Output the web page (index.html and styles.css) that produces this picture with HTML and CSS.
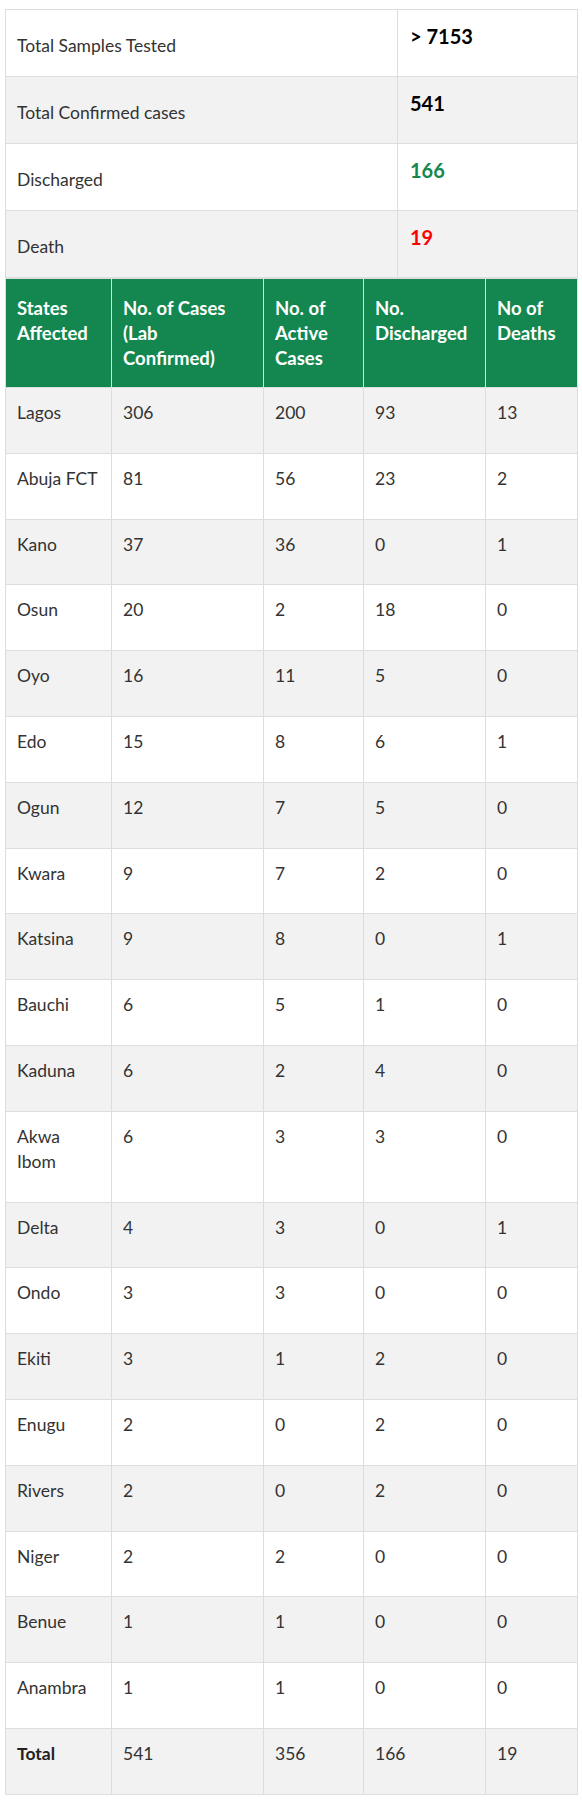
FILE: index.html
```html
<!DOCTYPE html>
<html lang="en">
<head>
<meta charset="utf-8">
<title>COVID-19 Nigeria</title>
<link rel="stylesheet" href="styles.css">
</head>
<body>
<div class="wrap">
  <table class="summary">
    <colgroup><col class="c-label"><col class="c-value"></colgroup>
    <tbody>
      <tr><td class="label">Total Samples Tested</td><td class="value">&gt; 7153</td></tr>
      <tr><td class="label">Total Confirmed cases</td><td class="value">541</td></tr>
      <tr><td class="label">Discharged</td><td class="value green">166</td></tr>
      <tr><td class="label">Death</td><td class="value red">19</td></tr>
    </tbody>
  </table>
  <table class="states">
    <colgroup>
      <col class="s1"><col class="s2"><col class="s3"><col class="s4"><col class="s5">
    </colgroup>
    <thead>
      <tr>
        <th>States Affected</th>
        <th>No. of Cases (Lab Confirmed)</th>
        <th>No. of Active Cases</th>
        <th>No. Discharged</th>
        <th>No of Deaths</th>
      </tr>
    </thead>
    <tbody>
      <tr><td>Lagos</td><td>306</td><td>200</td><td>93</td><td>13</td></tr>
      <tr><td>Abuja FCT</td><td>81</td><td>56</td><td>23</td><td>2</td></tr>
      <tr><td>Kano</td><td>37</td><td>36</td><td>0</td><td>1</td></tr>
      <tr><td>Osun</td><td>20</td><td>2</td><td>18</td><td>0</td></tr>
      <tr><td>Oyo</td><td>16</td><td>11</td><td>5</td><td>0</td></tr>
      <tr><td>Edo</td><td>15</td><td>8</td><td>6</td><td>1</td></tr>
      <tr><td>Ogun</td><td>12</td><td>7</td><td>5</td><td>0</td></tr>
      <tr><td>Kwara</td><td>9</td><td>7</td><td>2</td><td>0</td></tr>
      <tr><td>Katsina</td><td>9</td><td>8</td><td>0</td><td>1</td></tr>
      <tr><td>Bauchi</td><td>6</td><td>5</td><td>1</td><td>0</td></tr>
      <tr><td>Kaduna</td><td>6</td><td>2</td><td>4</td><td>0</td></tr>
      <tr><td>Akwa Ibom</td><td>6</td><td>3</td><td>3</td><td>0</td></tr>
      <tr><td>Delta</td><td>4</td><td>3</td><td>0</td><td>1</td></tr>
      <tr><td>Ondo</td><td>3</td><td>3</td><td>0</td><td>0</td></tr>
      <tr><td>Ekiti</td><td>3</td><td>1</td><td>2</td><td>0</td></tr>
      <tr><td>Enugu</td><td>2</td><td>0</td><td>2</td><td>0</td></tr>
      <tr><td>Rivers</td><td>2</td><td>0</td><td>2</td><td>0</td></tr>
      <tr><td>Niger</td><td>2</td><td>2</td><td>0</td><td>0</td></tr>
      <tr><td>Benue</td><td>1</td><td>1</td><td>0</td><td>0</td></tr>
      <tr><td>Anambra</td><td>1</td><td>1</td><td>0</td><td>0</td></tr>
      <tr class="total"><td><strong>Total</strong></td><td>541</td><td>356</td><td>166</td><td>19</td></tr>
    </tbody>
  </table>
</div>
</body>
</html>
```
FILE: styles.css
```css
html, body {
  margin: 0;
  padding: 0;
  background: #fff;
}
body {
  font-family: Lato, "Open Sans", Arial, sans-serif;
  font-size: 17.5px;
  line-height: 25px;
  color: #333;
}
.wrap {
  padding: 9px 5px 8px;
}
table {
  width: 572px;
  border-collapse: collapse;
  table-layout: fixed;
  border: 1px solid #ddd;
}
td, th {
  border: 1px solid #ddd;
  vertical-align: top;
  text-align: left;
}

/* summary table */
.summary .c-label { width: 392px; }
.summary .c-value { width: 180px; }
.summary tr:nth-child(even) td { background: #f2f2f2; }
.summary .label {
  padding: 23px 11px 18px;
  color: #333;
}
.summary .value {
  padding: 14px 12px 0;
  font-size: 20px;
  font-weight: 700;
  color: #000;
}
.summary .value.green { color: #13874f; }
.summary .value.red { color: #ff0000; }

/* states table */
.states .s1 { width: 106px; }
.states .s2 { width: 152px; }
.states .s3 { width: 100px; }
.states .s4 { width: 122px; }
.states .s5 { width: 92px; }
.states th {
  background: #13874f;
  color: #fff;
  font-size: 18.5px;
  font-weight: 700;
  padding: 17px 14px 16px 11px;
}
.states td {
  padding: 12px 11px 27.8px;
}
.states tbody tr:nth-child(odd) td { background: #f2f2f2; }
.states .total strong { font-weight: 700; color: #222; }
```
